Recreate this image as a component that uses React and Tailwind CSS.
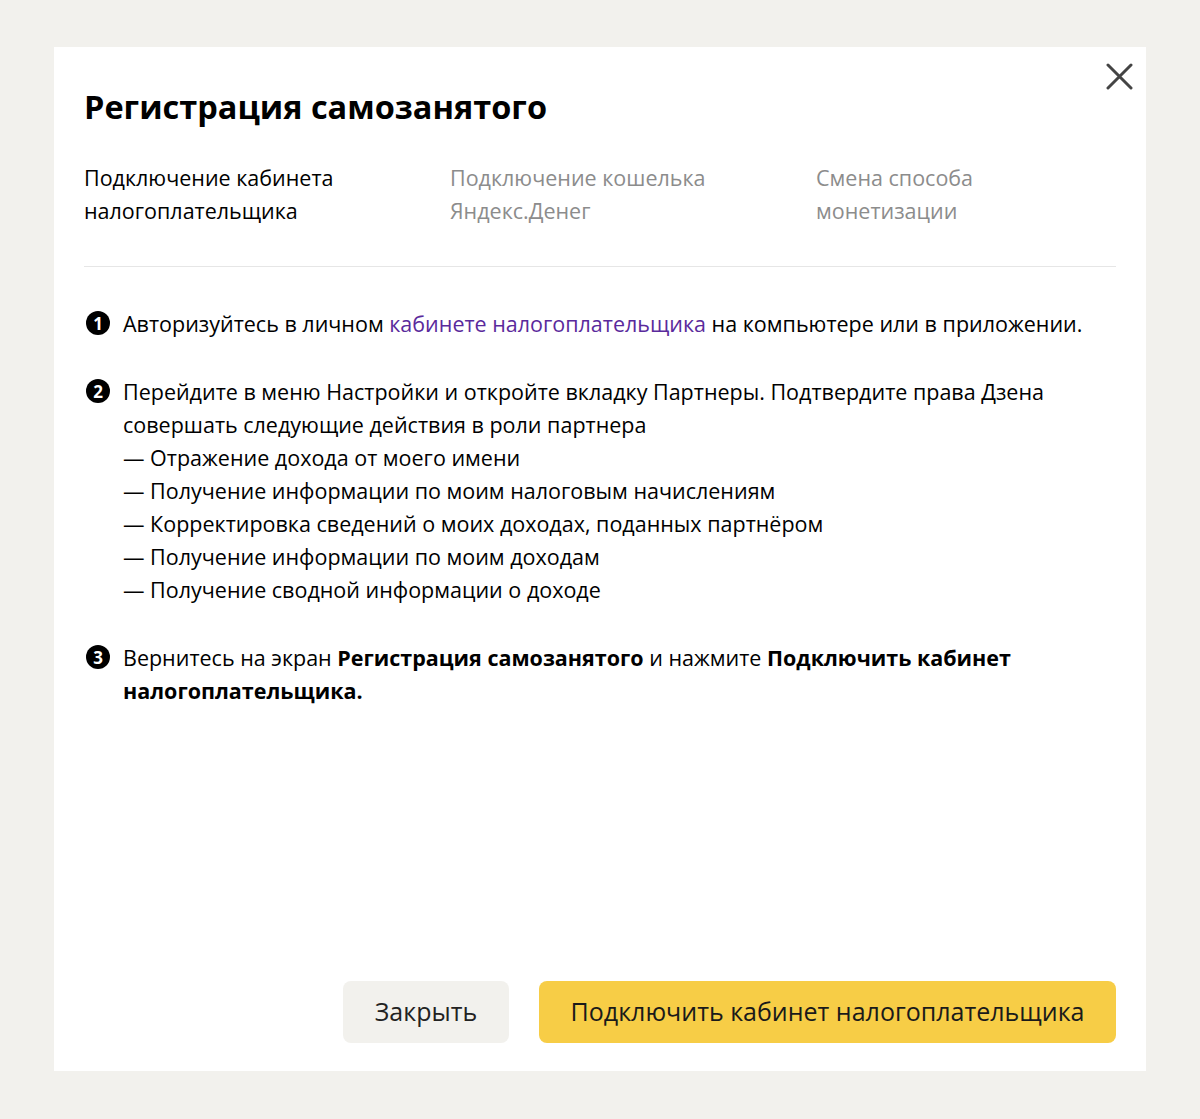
const font = { fontFamily: '"Open Sans", "Noto Sans", sans-serif' };

const steps = [
  { title: ["Подключение кабинета", "налогоплательщика"], active: true },
  { title: ["Подключение кошелька", "Яндекс.Денег"], active: false },
  { title: ["Смена способа", "монетизации"], active: false },
];

const rights = [
  "Отражение дохода от моего имени",
  "Получение информации по моим налоговым начислениям",
  "Корректировка сведений о моих доходах, поданных партнёром",
  "Получение информации по моим доходам",
  "Получение сводной информации о доходе",
];

function Num({ n }) {
  return (
    <span className="mt-[4px] flex h-6 w-6 shrink-0 items-center justify-center rounded-full bg-black text-[17px] font-bold leading-none text-white">
      {n}
    </span>
  );
}

export default function App() {
  return (
    <div className="min-h-[1119px] bg-[#f2f1ed] px-[54px] pt-[47px] pb-[48px]" style={font}>
      <div className="relative flex min-h-[1024px] flex-col bg-white px-[30px] pt-[36px] pb-[28px]">
        {/* закрыть */}
        <button className="absolute top-[16px] right-[13px] text-[#444]">
          <svg width="27" height="27" viewBox="0 0 27 27" fill="none">
            <path d="M2 2L25 25M25 2L2 25" stroke="currentColor" strokeWidth="3" strokeLinecap="round" />
          </svg>
        </button>

        <h1 className="text-[32.5px] font-bold leading-[48px] text-black">
          Регистрация самозанятого
        </h1>

        <div className="mt-[30px] grid grid-cols-[366px_366px_1fr] border-b border-[#e6e6e6] pb-[39px]">
          {steps.map((s, i) => (
            <div
              key={i}
              className={`text-[21.5px] leading-[33px] ${s.active ? "font-medium text-black" : "text-[#8c8c8c]"}`}
            >
              {s.title[0]}
              <br />
              {s.title[1]}
            </div>
          ))}
        </div>

        <div className="mt-[40px] flex flex-col gap-[35px] text-[21.5px] leading-[33px] text-black">
          <div className="flex gap-[13px] pl-[2px]">
            <Num n="1" />
            <p>
              Авторизуйтесь в личном{" "}
              <a className="text-[#5a2a9c]">кабинете налогоплательщика</a> на компьютере или в
              приложении.
            </p>
          </div>
          <div className="flex gap-[13px] pl-[2px]">
            <Num n="2" />
            <div>
              <p>
                Перейдите в меню Настройки и откройте вкладку Партнеры. Подтвердите права Дзена
                совершать следующие действия в роли партнера
              </p>
              {rights.map((r) => (
                <p key={r}>— {r}</p>
              ))}
            </div>
          </div>
          <div className="flex gap-[13px] pl-[2px]">
            <Num n="3" />
            <p>
              Вернитесь на экран <b>Регистрация самозанятого</b> и нажмите{" "}
              <b>Подключить кабинет налогоплательщика.</b>
            </p>
          </div>
        </div>

        <div className="mt-auto flex justify-end gap-[30px]">
          <button className="h-[62px] w-[166px] rounded-[8px] bg-[#f2f1ed] text-[25px] text-[#222]">
            Закрыть
          </button>
          <button className="h-[62px] w-[577px] rounded-[8px] bg-[#f7cd46] text-[25px] text-[#1a1a1a]">
            Подключить кабинет налогоплательщика
          </button>
        </div>
      </div>
    </div>
  );
}
